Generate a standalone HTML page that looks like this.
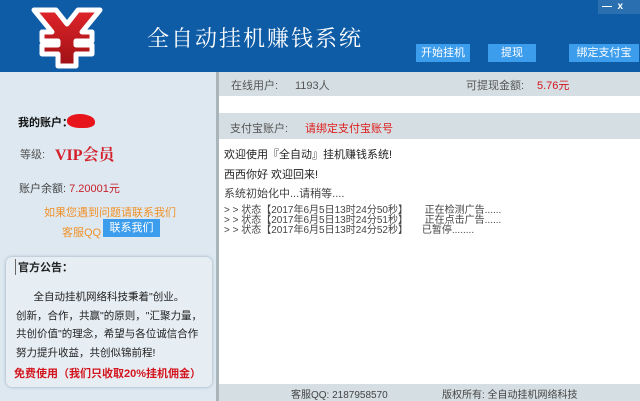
<!DOCTYPE html>
<html><head><meta charset="utf-8"><style>
*{margin:0;padding:0;box-sizing:border-box}
body{width:640px;height:401px;overflow:hidden;position:relative;background:#fff;font-family:"Liberation Sans","Noto Sans CJK SC",sans-serif;font-size:11px;color:#333}
.a{position:absolute;white-space:nowrap}
.hdr{left:0;top:0;width:640px;height:72px;background:#0f5ca6}
.btn{position:absolute;background:#3d9ded;color:#fff;font-size:11px;text-align:center;line-height:18px}
.left{left:0;top:72px;width:216px;height:329px;background:#dde8f1}
.gray{background:#d5dfe3}
</style></head><body>
<div class="a hdr"></div>
<svg class="a" style="left:28px;top:2px" width="78" height="70" viewBox="0 0 78 70">
<defs><linearGradient id="g" x1="0" y1="0" x2="0" y2="1"><stop offset="0" stop-color="#e0252a"/><stop offset="1" stop-color="#9e1015"/></linearGradient></defs>
<path d="M6 8 L28 8 L39 22 L50 8 L72 8 L54 30 L64 30 L64 39 L48 39 L48 43 L64 43 L64 52 L48 52 L48 64 L30 64 L30 52 L14 52 L14 43 L30 43 L30 39 L14 39 L14 30 L24 30 Z" fill="url(#g)" stroke="#fff" stroke-width="5" stroke-linejoin="round"/>
</svg>
<div class="a" style="left:147px;top:22px;font-size:22px;color:#fff;letter-spacing:2px;font-family:'Liberation Serif','Noto Serif CJK SC',serif">全自动挂机赚钱系统</div>
<div class="a" style="left:598px;top:0;width:42px;height:14px;background:#2a6fb0"></div>
<div class="a" style="left:602px;top:1px;color:#fff;font-size:10px;font-weight:bold">—&nbsp;&nbsp;x</div>
<div class="btn" style="left:416px;top:44px;width:54px">开始挂机</div>
<div class="btn" style="left:488px;top:44px;width:48px">提现</div>
<div class="btn" style="left:569px;top:44px;width:70px">绑定支付宝</div>

<div class="a left"></div>
<div class="a" style="left:18px;top:114px;font-weight:bold;color:#111">我的账户：</div>
<div class="a" style="left:67px;top:114px;width:28px;height:14px;background:#e8141c;border-radius:50% 60% 40% 50%"></div>
<div class="a" style="left:20px;top:146px;color:#555">等级:</div>
<div class="a" style="left:55px;top:142px;font-size:16px;font-weight:bold;color:#d4202a;font-family:'Liberation Serif','Noto Serif CJK SC',serif">VIP会员</div>
<div class="a" style="left:19px;top:180px;color:#444">账户余额: <span style="color:#c8202a">7.20001元</span></div>
<div class="a" style="left:44px;top:204px;color:#f0922a">如果您遇到问题请联系我们</div>
<div class="a" style="left:62px;top:224px;color:#f0922a">客服QQ</div>
<div class="btn" style="left:103px;top:219px;width:57px;height:18px">联系我们</div>
<div class="a" style="left:6px;top:257px;width:206px;height:130px;background:#e6edf3;border-radius:6px;box-shadow:0 0 3px #9ab"></div>
<div class="a" style="left:15px;top:259px;font-weight:bold;color:#222;border-left:1px solid #666;padding-left:2px">官方公告：</div>
<div class="a" style="left:16px;top:288px;line-height:18.5px;color:#222;font-size:10.5px">&nbsp;&nbsp;&nbsp;&nbsp;&nbsp;&nbsp;全自动挂机网络科技秉着"创业。<br>创新，合作，共赢"的原则，"汇聚力量，<br>共创价值"的理念，希望与各位诚信合作<br>努力提升收益，共创似锦前程!</div>
<div class="a" style="left:14px;top:365px;color:#d4141c;font-weight:bold">免费使用（我们只收取20%挂机佣金）</div>

<div class="a" style="left:216px;top:72px;width:3px;height:329px;background:#a9b4bb"></div>
<div class="a gray" style="left:219px;top:72px;width:421px;height:24px"></div>
<div class="a" style="left:231px;top:77px;color:#555">在线用户:</div>
<div class="a" style="left:295px;top:77px;color:#555">1193人</div>
<div class="a" style="left:466px;top:77px;color:#555">可提现金额:</div>
<div class="a" style="left:537px;top:77px;color:#d4141c">5.76元</div>
<div class="a gray" style="left:219px;top:113px;width:421px;height:26px"></div>
<div class="a" style="left:230px;top:120px;color:#555">支付宝账户:</div>
<div class="a" style="left:305px;top:120px;color:#e01c1c">请绑定支付宝账号</div>
<div class="a" style="left:224px;top:146px;color:#222">欢迎使用『全自动』挂机赚钱系统!</div>
<div class="a" style="left:224px;top:166px;color:#222">西西你好 欢迎回来!</div>
<div class="a" style="left:224px;top:185px;color:#444">系统初始化中...请稍等....</div>
<div class="a" style="left:224px;top:206px;color:#444;font-size:10px;line-height:10px">&gt; &gt; 状态【2017年6月5日13时24分50秒】&nbsp;&nbsp;&nbsp;&nbsp;&nbsp;&nbsp;正在检测广告......<br>&gt; &gt; 状态【2017年6月5日13时24分51秒】&nbsp;&nbsp;&nbsp;&nbsp;&nbsp;&nbsp;正在点击广告......<br>&gt; &gt; 状态【2017年6月5日13时24分52秒】&nbsp;&nbsp;&nbsp;&nbsp;&nbsp;已暂停........</div>
<div class="a gray" style="left:219px;top:384px;width:421px;height:17px"></div>
<div class="a" style="left:291px;top:386px;color:#444;font-size:10px">客服QQ: 2187958570</div>
<div class="a" style="left:442px;top:386px;color:#444;font-size:10px">版权所有: 全自动挂机网络科技</div>
</body></html>
